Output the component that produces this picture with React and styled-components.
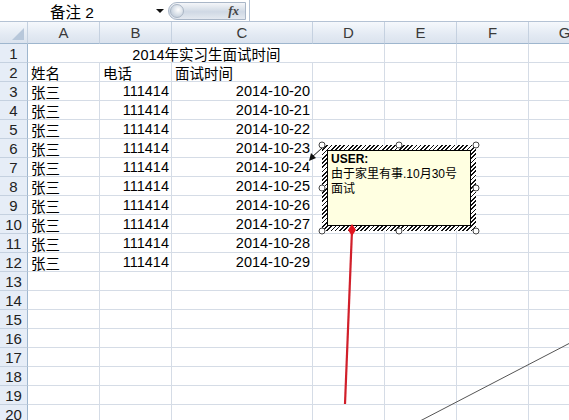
import React from 'react'
import styled, { createGlobalStyle } from 'styled-components'

const GlobalStyle = createGlobalStyle`
  body {
    margin: 0;
    background: #fff;
    overflow: hidden;
  }
`

const Page = styled.div`
  position: relative;
  width: 569px;
  height: 420px;
  overflow: hidden;
  font-family: 'Liberation Sans', 'Noto Sans CJK SC', sans-serif;
  color: #000;
`

const FormulaBar = styled.div`
  display: flex;
  align-items: center;
  height: 21px;
  border-bottom: 1px solid #b4c2d4;
  background: #fff;
`

const NameBox = styled.div`
  width: 168px;
  height: 21px;
  display: flex;
  align-items: center;
  box-sizing: border-box;
  padding-left: 50px;
  font-size: 15.5px;
  position: relative;
`

const DropArrow = styled.span`
  position: absolute;
  right: 4px;
  top: 9px;
  width: 0;
  height: 0;
  border-left: 4px solid transparent;
  border-right: 4px solid transparent;
  border-top: 4px solid #111;
`

const FxCapsule = styled.div`
  width: 78px;
  height: 18px;
  border-radius: 9px 0 0 9px;
  background: linear-gradient(#f4f6f9, #cfd8e4 55%, #e4e9f0);
  border: 1px solid #a9b6c7;
  box-sizing: border-box;
  display: flex;
  align-items: center;
  justify-content: flex-end;
  padding-right: 6px;
  position: relative;
`

const Knob = styled.span`
  position: absolute;
  left: 1px;
  top: 1px;
  width: 14px;
  height: 14px;
  border-radius: 50%;
  background: radial-gradient(circle at 60% 40%, #fff, #c9d3df 70%);
  border: 1px solid #aab6c5;
  box-sizing: border-box;
`

const Fx = styled.span`
  font-family: 'Liberation Serif', serif;
  font-style: italic;
  font-weight: bold;
  font-size: 13px;
  color: #444;
`

const FormulaInput = styled.div`
  flex: 1;
  height: 21px;
  border-left: 1px solid #b4c2d4;
  margin-left: 3px;
`

const Grid = styled.div`
  display: grid;
  grid-template-columns: 28px 72px 72px 141px 72px 72px 72px 72px;
  grid-template-rows: 22px repeat(20, 19px);
`

const ColHead = styled.div`
  box-sizing: border-box;
  display: flex;
  align-items: center;
  justify-content: center;
  font-size: 15px;
  color: #3a3a3a;
  background: linear-gradient(#f5f8fc, #e3eaf3 60%, #dbe3ee);
  border-right: 1px solid #c5d1e0;
  border-bottom: 1px solid #9eb6ce;
`

const Corner = styled(ColHead)`
  position: relative;
  &::after {
    content: '';
    position: absolute;
    right: 3px;
    bottom: 3px;
    border-left: 12px solid transparent;
    border-bottom: 12px solid #b7c7da;
  }
`

const RowHead = styled.div`
  box-sizing: border-box;
  display: flex;
  align-items: center;
  justify-content: center;
  font-size: 15px;
  color: #222;
  background: #e6edf7;
  border-right: 1px solid #9eb6ce;
  border-bottom: 1px solid #c5d1e0;
`

const Cell = styled.div`
  box-sizing: border-box;
  display: flex;
  align-items: center;
  justify-content: ${p => (p.$align === 'right' ? 'flex-end' : p.$align === 'center' ? 'center' : 'flex-start')};
  grid-column: ${p => (p.$span ? `span ${p.$span}` : 'auto')};
  padding: 0 2px 0 3px;
  font-size: 14.5px;
  white-space: nowrap;
  border-right: 1px solid #d5dce6;
  border-bottom: 1px solid #d5dce6;
`

const Comment = styled.div`
  position: absolute;
  left: 322px;
  top: 145px;
  width: 154px;
  height: 86px;
  box-sizing: border-box;
  padding: 5px;
  background: repeating-linear-gradient(-45deg, #111 0 1.2px, #fff 1.2px 3px);
`

const CommentBody = styled.div`
  width: 100%;
  height: 100%;
  box-sizing: border-box;
  background: #ffffe1;
  border: 1px solid #000;
  padding: 1px 3px;
  font-size: 12px;
  line-height: 15px;
`

const Author = styled.div`
  font-weight: bold;
`

const Handle = styled.span`
  position: absolute;
  width: 7px;
  height: 7px;
  border-radius: 50%;
  background: #fff;
  border: 1px solid #444;
  box-sizing: border-box;
  transform: translate(-50%, -50%);
`

const Drawing = styled.svg`
  position: absolute;
  left: 0;
  top: 0;
  pointer-events: none;
`

const cols = ['A', 'B', 'C', 'D', 'E', 'F', 'G']
const people = Array.from({ length: 10 }, (_, i) => ({
  name: '张三',
  phone: '111414',
  date: `2014-10-${20 + i}`,
}))

const handles = [
  [0, 0], [77, 0], [154, 0],
  [0, 43], [154, 43],
  [0, 86], [77, 86], [154, 86],
]

const EmptyCells = ({ count }) =>
  Array.from({ length: count }, (_, i) => <Cell key={i} />)

const App = () => {
  const rows = []
  rows.push(
    <React.Fragment key="r1">
      <RowHead>1</RowHead>
      <Cell $span={4} $align="center">2014年实习生面试时间</Cell>
      <EmptyCells count={3} />
    </React.Fragment>
  )
  rows.push(
    <React.Fragment key="r2">
      <RowHead>2</RowHead>
      <Cell>姓名</Cell>
      <Cell>电话</Cell>
      <Cell>面试时间</Cell>
      <EmptyCells count={4} />
    </React.Fragment>
  )
  people.forEach((p, i) => {
    rows.push(
      <React.Fragment key={`p${i}`}>
        <RowHead>{i + 3}</RowHead>
        <Cell>{p.name}</Cell>
        <Cell $align="right">{p.phone}</Cell>
        <Cell $align="right">{p.date}</Cell>
        <EmptyCells count={4} />
      </React.Fragment>
    )
  })
  for (let r = 13; r <= 20; r++) {
    rows.push(
      <React.Fragment key={`e${r}`}>
        <RowHead>{r}</RowHead>
        <EmptyCells count={7} />
      </React.Fragment>
    )
  }

  return (
    <Page>
      <GlobalStyle />
      <FormulaBar>
        <NameBox>
          备注 2
          <DropArrow />
        </NameBox>
        <FxCapsule>
          <Knob />
          <Fx>fx</Fx>
        </FxCapsule>
        <FormulaInput />
      </FormulaBar>
      <Grid>
        <Corner />
        {cols.map(c => (
          <ColHead key={c}>{c}</ColHead>
        ))}
        {rows}
      </Grid>

      <Comment>
        <CommentBody>
          <Author>USER:</Author>
          <div>由于家里有事.10月30号</div>
          <div>面试</div>
        </CommentBody>
        {handles.map(([x, y], i) => (
          <Handle key={i} style={{ left: x, top: y }} />
        ))}
      </Comment>

      <Drawing width="569" height="420">
        <line x1="322" y1="148" x2="311" y2="158" stroke="#111" strokeWidth="1" />
        <polygon points="309,161 311,153 316,158" fill="#111" />
        <line x1="345" y1="404" x2="352" y2="230" stroke="#d11f2a" strokeWidth="2.2" />
        <polygon points="352,224 356,230 352,236 348,230" fill="#e0141e" />
        <line x1="420" y1="421" x2="570" y2="343" stroke="#555" strokeWidth="1" />
      </Drawing>
    </Page>
  )
}

export default App
